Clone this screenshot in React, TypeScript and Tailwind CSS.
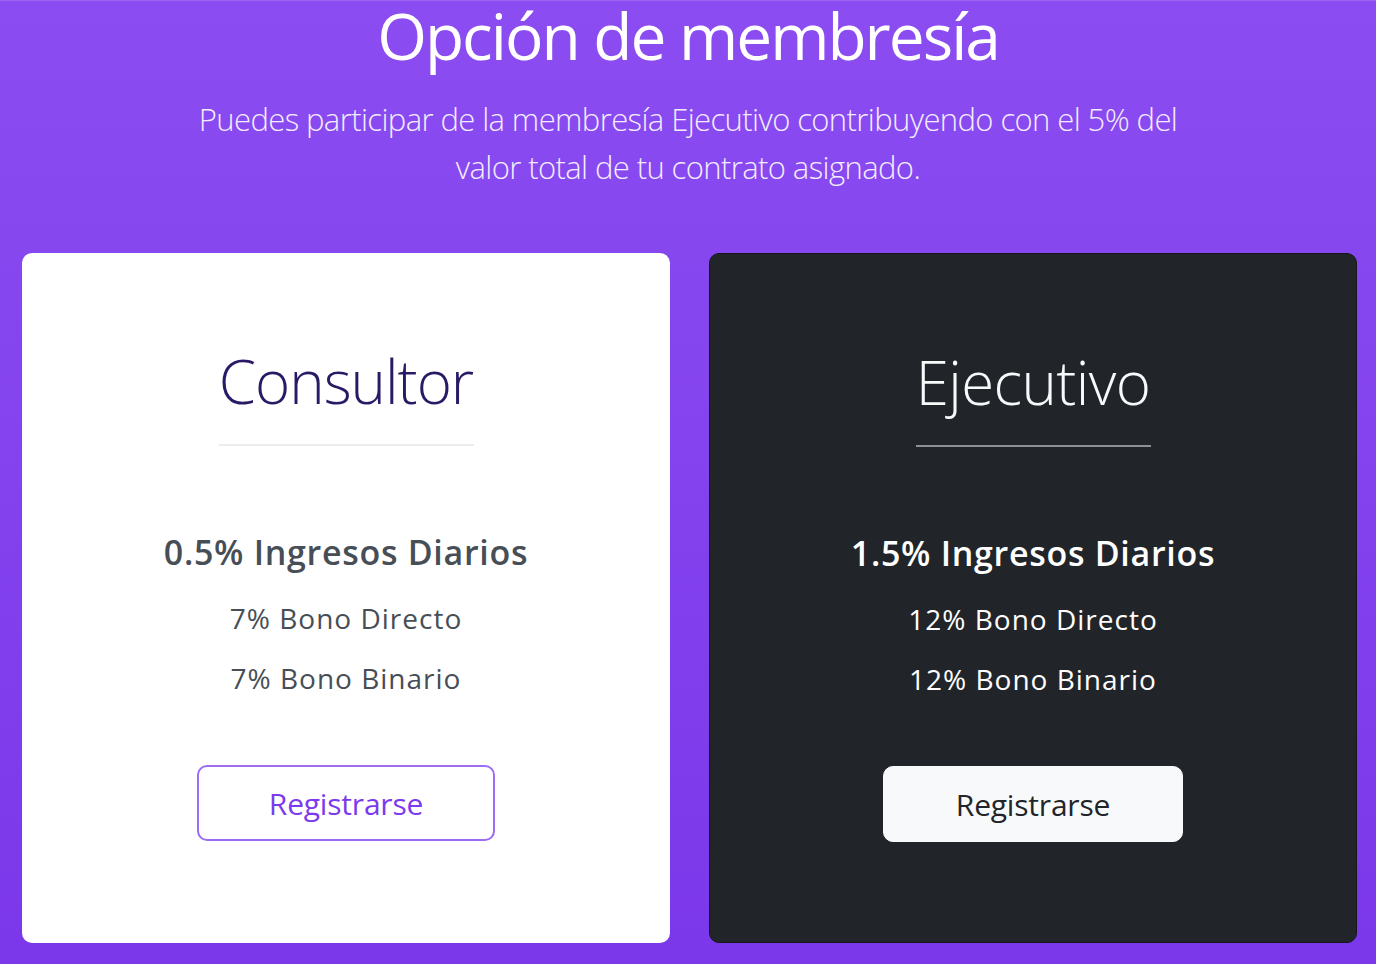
import React from "react";

type Plan = {
  name: string;
  daily: string;
  direct: string;
  binary: string;
  dark?: boolean;
};

const plans: Plan[] = [
  { name: "Consultor", daily: "0.5%", direct: "7%", binary: "7%" },
  { name: "Ejecutivo", daily: "1.5%", direct: "12%", binary: "12%", dark: true },
];

const font = { fontFamily: '"Open Sans", "Noto Sans", "Liberation Sans", sans-serif' };

function PlanCard({ plan }: { plan: Plan }) {
  const dark = !!plan.dark;
  return (
    <div
      className={
        dark
          ? "flex h-[690px] flex-col items-center rounded-[10px] border border-[#15181b] bg-[#212529] text-white"
          : "flex h-[690px] flex-col items-center rounded-[10px] bg-white text-[#474e55]"
      }
    >
      <h2
        className={
          dark
            ? "mt-[88px] text-[60px] font-light leading-[80px] tracking-[-0.6px] text-[#f8f9fa]"
            : "mt-[88px] text-[60px] font-light leading-[80px] tracking-[-1px] text-[#2a1a66]"
        }
      >
        {plan.name}
      </h2>
      <div
        className={
          dark
            ? "mt-[23px] h-[2px] w-[235px] bg-[#8d9094]"
            : "mt-[23px] h-[2px] w-[255px] bg-[#ececef]"
        }
      />
      <p className="mt-[86px] text-[34px] font-semibold leading-[40px] tracking-[0.7px]">
        {plan.daily} Ingresos Diarios
      </p>
      <p className="mt-[26px] text-[28px] leading-[40px] tracking-[1px]">
        {plan.direct} Bono Directo
      </p>
      <p className="mt-[20px] text-[28px] leading-[40px] tracking-[1px]">
        {plan.binary} Bono Binario
      </p>
      <button
        className={
          dark
            ? "mt-[67px] h-[76px] w-[300px] rounded-[10px] border border-[#f8f9fa] bg-[#f8f9fa] text-[30px] text-[#212529] tracking-[-0.2px]"
            : "mt-[67px] h-[76px] w-[298px] rounded-[10px] border-2 border-[#9d6cf5] bg-white text-[30px] text-[#7c3aed] tracking-[-0.2px]"
        }
        style={font}
      >
        Registrarse
      </button>
    </div>
  );
}

export default function App() {
  return (
    <div
      className="h-[964px] w-full overflow-hidden bg-gradient-to-b from-[#8b4cf1] to-[#7b37ea] border-t border-[#9a66f3]"
      style={font}
    >
      <header className="flex flex-col items-center text-center text-white">
        <h1 className="text-[64px] font-normal leading-[70px] tracking-[-2px]">
          Opción de membresía
        </h1>
        <p className="mt-[24px] text-[31px] font-light leading-[48px] tracking-[-0.6px] text-[#f3ecff]">
          Puedes participar de la membresía Ejecutivo contribuyendo con el 5% del
          <br />
          valor total de tu contrato asignado.
        </p>
      </header>
      <main className="mt-[62px] grid grid-cols-2 gap-[39px] pl-[22px] pr-[19px]">
        {plans.map((p) => (
          <PlanCard key={p.name} plan={p} />
        ))}
      </main>
    </div>
  );
}
